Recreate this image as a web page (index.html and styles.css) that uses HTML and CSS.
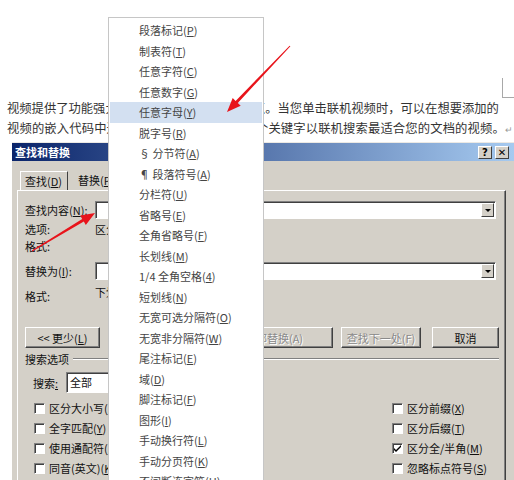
FILE: index.html
```html
<!DOCTYPE html>
<html lang="zh-CN">
<head>
  <meta charset="UTF-8">
  <title>查找和替换</title>
  <link rel="stylesheet" href="styles.css">
</head>
<body>
<div class="page">
  <div class="doc-top">
    <div class="crop-mark"></div>
  </div>
  <p class="line">视频提供了功能强大的方法帮助您证明您的观点。当您单击联机视频时，可以在想要添加的</p>
  <p class="line wide">视频的嵌入代码中进行粘贴。您也可以键入一个关键字以联机搜索最适合您的文档的视频。<span class="ret">↵</span></p>

  <div class="dialog">
    <div class="titlebar">
      <span class="title">查找和替换</span>
      <div class="title-btns">
        <span class="tb-btn">?</span>
        <span class="tb-btn">✕</span>
      </div>
    </div>
    <div class="dlg-body">
      <div class="tabs">
        <span class="tab active">查找(<u>D</u>)</span>
        <span class="tab">替换(<u>P</u>)</span>
      </div>
      <div class="panel">
        <div class="field-row">
          <span class="lbl">查找内容(<u>N</u>):</span>
          <div class="input"><span class="drop"><span class="tri"></span></span></div>
        </div>
        <div class="info-row first">
          <span class="lbl">选项:</span>
          <span>区分全/半角</span>
        </div>
        <div class="info-row">
          <span class="lbl">格式:</span>
        </div>
        <div class="field-row replace">
          <span class="lbl">替换为(<u>I</u>):</span>
          <div class="input"><span class="drop"><span class="tri"></span></span></div>
        </div>
        <div class="format-row">
          <span class="lbl">格式:</span>
          <span>下划线</span>
        </div>

        <div class="btn-row">
          <span class="btn less">&lt;&lt; 更少(<u>L</u>)</span>
          <span class="spacer"></span>
          <span class="btn disabled w75">替换(R)</span>
          <span class="btn disabled replace-all">全部替换(A)</span>
          <span class="btn disabled w80">查找下一处(F)</span>
          <span class="btn cancel">取消</span>
        </div>

        <div class="group-head">
          <span>搜索选项</span>
          <span class="etch"></span>
        </div>

        <div class="search-row">
          <span class="search-lbl">搜索<u>:</u></span>
          <div class="select">全部</div>
        </div>

        <div class="checks">
          <div class="col">
            <div class="check"><span class="box"></span><span>区分大小写(<u>H</u>)</span></div>
            <div class="check"><span class="box"></span><span>全字匹配(<u>Y</u>)</span></div>
            <div class="check"><span class="box"></span><span>使用通配符(<u>U</u>)</span></div>
            <div class="check"><span class="box"></span><span>同音(英文)(<u>K</u>)</span></div>
          </div>
          <div class="col">
            <div class="check"><span class="box"></span><span>区分前缀(<u>X</u>)</span></div>
            <div class="check"><span class="box"></span><span>区分后缀(<u>T</u>)</span></div>
            <div class="check"><span class="box"><svg width="9" height="9" viewBox="0 0 9 9"><path d="M1 4 L3 6 L8 1 L8 3 L3 8 L1 6 Z" fill="#000"/></svg></span><span>区分全/半角(<u>M</u>)</span></div>
            <div class="check"><span class="box"></span><span>忽略标点符号(<u>S</u>)</span></div>
          </div>
        </div>
      </div>
    </div>
  </div>

  <ul class="menu">
    <li>段落标记(<u>P</u>)</li>
    <li>制表符(<u>T</u>)</li>
    <li>任意字符(<u>C</u>)</li>
    <li>任意数字(<u>G</u>)</li>
    <li class="hover">任意字母(<u>Y</u>)</li>
    <li>脱字号(<u>R</u>)</li>
    <li>§ 分节符(<u>A</u>)</li>
    <li>¶ 段落符号(<u>A</u>)</li>
    <li>分栏符(<u>U</u>)</li>
    <li>省略号(<u>E</u>)</li>
    <li>全角省略号(<u>F</u>)</li>
    <li>长划线(<u>M</u>)</li>
    <li>1/4 全角空格(<u>4</u>)</li>
    <li>短划线(<u>N</u>)</li>
    <li>无宽可选分隔符(<u>O</u>)</li>
    <li>无宽非分隔符(<u>W</u>)</li>
    <li>尾注标记(<u>E</u>)</li>
    <li>域(<u>D</u>)</li>
    <li>脚注标记(<u>F</u>)</li>
    <li>图形(<u>I</u>)</li>
    <li>手动换行符(<u>L</u>)</li>
    <li>手动分页符(<u>K</u>)</li>
    <li>不间断连字符(<u>H</u>)</li>
  </ul>

  <svg class="arrows" width="514" height="480" viewBox="0 0 514 480">
    <polygon fill="#e8141b" points="289.6,45.7 290.4,46.3 237.8,102.9 240.7,105.7 227,112 232.7,98.1 235.6,100.9"/>
    <polygon fill="#e8141b" points="31.7,250.6 82.2,218.9 80.2,215.5 95,213 85.8,224.9 83.8,221.5 32.3,251.4"/>
  </svg>
</div>
</body>
</html>
```

FILE: styles.css
```css
* {
  box-sizing: border-box;
}
body {
  margin: 0;
  background: #fff;
  font-family: "Noto Sans CJK SC", "Noto Sans", sans-serif;
}
.page {
  position: relative;
  width: 514px;
  height: 480px;
  overflow: hidden;
}
.doc-top {
  height: 98px;
  display: flex;
  justify-content: flex-end;
  align-items: flex-end;
}
.crop-mark {
  width: 12px;
  height: 20px;
  border-left: 1px solid #a8a8a8;
  border-bottom: 1px solid #a8a8a8;
}
.line {
  margin: 0;
  height: 20px;
  padding-left: 7px;
  font-size: 12.3px;
  line-height: 20px;
  color: #333;
  white-space: nowrap;
}
.line.wide {
  letter-spacing: 0.15px;
}
.ret {
  color: #999;
  font-size: 9px;
  line-height: 1;
}

/* диалог */
.dialog {
  margin: 4px 0 0 12px;
  width: 502px;
  height: 340px;
  background: #d4d0c8;
  border-top: 1px solid #ece9e4;
  font-size: 11px;
  color: #111;
}
.titlebar {
  height: 18px;
  display: flex;
  align-items: center;
  justify-content: space-between;
  padding: 0 5px 0 3px;
  background: linear-gradient(to right, #0a246a, #a6caf0);
}
.title {
  color: #fff;
  font-weight: bold;
  font-size: 11px;
  line-height: 18px;
}
.title-btns {
  display: flex;
  gap: 3px;
}
.tb-btn {
  width: 14px;
  height: 13px;
  background: #d4d0c8;
  border: 1px solid;
  border-color: #fff #404040 #404040 #fff;
  font: bold 10px "DejaVu Sans", sans-serif;
  line-height: 11px;
  text-align: center;
  color: #000;
}
.dlg-body {
  padding-left: 5px;
}
.tabs {
  display: flex;
  align-items: flex-end;
  height: 29px;
  padding-left: 3px;
}
.tab {
  height: 19px;
  line-height: 18px;
  padding: 0 8px 0 10px;
}
.tab.active {
  width: 48px;
  padding: 0 0 0 4px;
  border-top: 1px solid #fff;
  border-left: 1px solid #fff;
  border-right: 1px solid #404040;
}
.panel {
  width: 489px;
  height: 300px;
  padding: 10px 6px 0 7px;
  border-top: 1px solid #fff;
  border-left: 1px solid #fff;
  border-right: 1px solid #404040;
  box-shadow: inset -1px 0 #808080;
}
.lbl {
  width: 70px;
  flex-shrink: 0;
}
.field-row {
  display: flex;
  align-items: center;
  height: 18px;
}
.field-row.replace {
  margin-top: 7px;
}
.input {
  flex: 1;
  height: 18px;
  margin-right: 3px;
  background: #fff;
  border: 1px solid;
  border-color: #808080 #fff #fff #808080;
  box-shadow: inset 1px 1px #404040;
  display: flex;
  justify-content: flex-end;
  align-items: center;
  padding-right: 1px;
}
.drop {
  width: 13px;
  height: 14px;
  background: #d4d0c8;
  border: 1px solid;
  border-color: #fff #404040 #404040 #fff;
  display: flex;
  justify-content: center;
  align-items: center;
}
.tri {
  width: 0;
  height: 0;
  border-left: 3px solid transparent;
  border-right: 3px solid transparent;
  border-top: 3px solid #000;
}
.info-row {
  display: flex;
  height: 17px;
  line-height: 17px;
}
.info-row.first {
  margin-top: 2px;
}
.format-row {
  display: flex;
  height: 21px;
  margin-top: 4px;
  line-height: 17px;
}
.format-row .lbl {
  padding-top: 4px;
}

/* кнопки */
.btn-row {
  display: flex;
  gap: 8px;
  margin-top: 22px;
}
.spacer {
  flex: 1;
}
.btn {
  height: 21px;
  display: flex;
  justify-content: center;
  align-items: center;
  background: #d4d0c8;
  border: 1px solid;
  border-color: #fff #404040 #404040 #fff;
  box-shadow: inset -1px -1px #808080;
}
.btn.less {
  width: 75px;
}
.btn.w75 {
  width: 75px;
}
.btn.w80 {
  width: 80px;
}
.btn.replace-all {
  width: 118px;
}
.btn.cancel {
  width: 67px;
  margin-left: 3px;
}
.btn.disabled {
  color: #8a8a8a;
  text-shadow: 1px 1px #fff;
}
.group-head {
  display: flex;
  align-items: center;
  height: 17px;
  margin-top: 2px;
}
.etch {
  flex: 1;
  margin-left: 4px;
  height: 2px;
  border-top: 1px solid #808080;
  border-bottom: 1px solid #fff;
}
.search-row {
  display: flex;
  align-items: center;
  margin-top: 5px;
  padding-left: 8px;
}
.search-lbl {
  width: 33px;
}
.select {
  width: 130px;
  height: 21px;
  padding-left: 3px;
  line-height: 19px;
  background: #fff;
  border: 1px solid;
  border-color: #808080 #fff #fff #808080;
  box-shadow: inset 1px 1px #404040;
}
.checks {
  display: grid;
  grid-template-columns: 358px auto;
  margin-top: 5px;
  padding-left: 9px;
}
.check {
  display: flex;
  align-items: center;
  gap: 4px;
  height: 20px;
}
.box {
  width: 11px;
  height: 11px;
  background: #fff;
  border: 1px solid;
  border-color: #808080 #fff #fff #808080;
  box-shadow: inset 1px 1px #404040;
  display: flex;
  justify-content: center;
  align-items: center;
}

/* выпадающее меню */
.menu {
  position: absolute;
  left: 108px;
  top: 17px;
  width: 156px;
  height: 480px;
  margin: 0;
  padding: 2px 0 0;
  list-style: none;
  background: #fff;
  border: 1px solid #c6c6c6;
}
.menu li {
  height: 20.5px;
  line-height: 20.5px;
  margin: 0 1px;
  padding-left: 29px;
  font-size: 11px;
  color: #444;
  white-space: nowrap;
}
.menu li.hover {
  background: #d3e0f1;
}
.arrows {
  position: absolute;
  left: 0;
  top: 0;
  pointer-events: none;
}
```
